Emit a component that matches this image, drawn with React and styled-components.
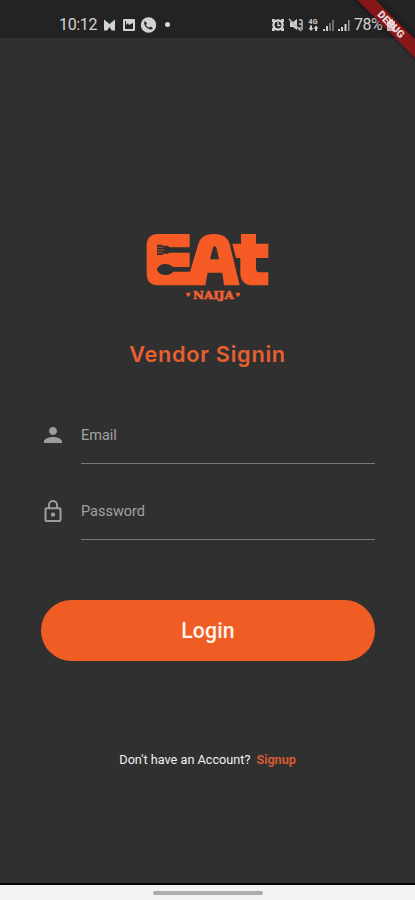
import React from 'react';
import styled, { createGlobalStyle } from 'styled-components';

const Global = createGlobalStyle`
  * { box-sizing: border-box; }
  html, body { margin: 0; background: #303030; }
  body { font-family: Roboto, sans-serif; }
`;

const Screen = styled.div`
  position: relative;
  width: 415px;
  height: 900px;
  display: flex;
  flex-direction: column;
  overflow: hidden;
  background: #303030;
`;

const StatusBar = styled.header`
  height: 38px;
  flex: none;
  display: flex;
  justify-content: space-between;
  align-items: center;
  padding: 11px 18px 0 59px;
  background: #232323;
  color: #d2d2d2;
`;

const StatusGroup = styled.div`
  display: flex;
  align-items: center;
  gap: ${(p) => p.$gap}px;
`;

const StatusText = styled.span`
  font-size: 16px;
  line-height: 20px;
  letter-spacing: ${(p) => p.$spacing || 0}px;
`;

const Dot = styled.span`
  width: 5px;
  height: 5px;
  margin-left: 3px;
  border-radius: 50%;
  background: #d8d8d8;
`;

const Ribbon = styled.div`
  position: absolute;
  top: 18px;
  left: 331px;
  width: 120px;
  height: 13px;
  transform: rotate(45deg);
  background: rgba(143, 21, 25, 0.93);
  box-shadow: 0 0 5px rgba(0, 0, 0, 0.5);
  color: #e6d8d8;
  font-size: 10.5px;
  font-weight: 900;
  line-height: 13px;
  text-align: center;
`;

const Battery = styled.svg`
  position: relative;
  z-index: 1;
  width: 12px;
  height: 14px;
  fill: #f0e6e6;
  opacity: 0.7;
`;

const Content = styled.main`
  flex: 1;
  display: flex;
  flex-direction: column;
  align-items: center;
  padding: 182px 40px 0;
`;

const Title = styled.h1`
  margin: 29px 0 0;
  height: 30px;
  font-family: Inter, sans-serif;
  font-size: 21.7px;
  font-weight: 600;
  line-height: 30px;
  letter-spacing: 0.75px;
  white-space: nowrap;
  color: #e76130;
`;

const Form = styled.form`
  width: 100%;
  margin-top: 37px;
`;

const Field = styled.label`
  display: flex;
  height: 76px;
  color: #a2a2a2;
`;

const FieldIcon = styled.svg`
  width: 24px;
  height: 24px;
  margin: 17px 16px 0 1px;
  flex: none;
  fill: #9d9d9d;
`;

const FieldBox = styled.span`
  flex: 1;
  height: 58px;
  padding-top: 20px;
  border-bottom: 1px solid #777;
  font-size: 14.5px;
  line-height: 20px;
`;

const LoginButton = styled.button`
  display: block;
  width: 334px;
  height: 61px;
  margin: 42px 0 0 1px;
  padding: 1px 0 0;
  border: 0;
  border-radius: 31px;
  background: #ef5d24;
  color: #fff4ec;
  font: 500 21.200px/30px Roboto, sans-serif;
  letter-spacing: 0.2px;
`;

const Prompt = styled.p`
  display: flex;
  gap: 6px;
  margin: 89px 0 0;
  font-size: 12.7px;
  line-height: 20px;
  white-space: nowrap;
  color: #f0f0f0;
`;

const SignupLink = styled.span`
  font-weight: 700;
  letter-spacing: -0.1px;
  color: #d45a30;
`;

const NavBar = styled.footer`
  height: 17px;
  flex: none;
  display: flex;
  justify-content: center;
  padding-top: 6px;
  border-top: 2px solid #050505;
  background: #f3f3f3;
`;

const Handle = styled.span`
  width: 110px;
  height: 4px;
  border-radius: 2px;
  background: #adadad;
`;

const Logo = () => (
  <svg width="155" height="90" viewBox="0 0 465 270" role="img" aria-label="Eat Naija">
    <g fill="#f65b25">
      <path d="M84 42H179V82H119L113 77H99L96 74H81V105H97L101 101H113L119 98H179V141H130C122 134 112 131 103 132C92 133 83 140 81 149C84 158 93 164 103 165C113 166 123 162 130 155H180L205 72Q214 42 247 42H257Q289 42 299 72L329 196H282L277 158H233L226 196H84Q50 196 50 160V78Q50 42 84 42Z" />
      <path d="M333 42H378V71H415V114H378V146Q378 157 389 157H415V196H371Q331 196 331 158V114H318L307 71H333Z" />
      <path d="M168 218h14l-2 7-5 7-5-7zM317 218h14l-2 7-5 7-5-7z" />
    </g>
    <path d="M254 78Q258 78 260 86L267 118H240L248 86Q250 78 254 78Z" fill="#303030" />
    <path d="M81 82H99M81 90H103M81 98H99" stroke="#f65b25" strokeWidth="2" />
    <text x="250" y="236" textAnchor="middle" textLength="122" lengthAdjust="spacingAndGlyphs" fill="#ec6032" stroke="#ec6032" strokeWidth="2" fontFamily="DejaVu Serif, serif" fontWeight="700" fontSize="34">NAIJA</text>
  </svg>
);

const NotificationIcons = () => (
  <svg width="53" height="16" viewBox="0 0 53 16" fill="#d2d2d2">
    <path d="M1 2.5 6.5 7 12 2.5V13.5H8.8L6.5 10 4.2 13.5H1Z" />
    <path fillRule="evenodd" d="M21 2H31Q32 2 32 3V13Q32 14 31 14H21Q20 14 20 13V3Q20 2 21 2ZM22 4V12H30V6L26 8L25 6L23 8V4Z" />
    <circle cx="45.5" cy="8" r="7.7" />
    <path d="M42 4 44 6.2 43 8Q44.3 10 46 10.5L48 9.5 50 11.5Q48.5 13 46.5 12.2 42 10.5 41 6.5 41 4.8 42 4Z" fill="#303030" />
  </svg>
);

const DeviceIcons = () => (
  <svg width="80" height="16" viewBox="0 0 80 16" fill="#cfcfcf">
    <path d="M1 2H4L3 5 1 5ZM10 2H13V5L11 5ZM1 11H3L4 14H1ZM11 11H13V14H10Z" />
    <circle cx="7" cy="8" r="4.6" fill="none" stroke="#dadada" strokeWidth="2.2" />
    <path d="M7 5V8.5H9.5" fill="none" stroke="#dadada" strokeWidth="1.3" />
    <path d="M19 5H22L26 2V13L22 10H19Z" />
    <path d="M18 2 30 14M28 3H31M28 7H31M28 11H30M31 3V13" fill="none" stroke="#b9b9b9" strokeWidth="1.5" />
    <text x="37.5" y="7" fontFamily="Roboto, sans-serif" fontSize="7" fontWeight="700" textLength="9">4G</text>
    <path d="M40 14 37.5 11H39V8.5H41V11H42.5ZM45 8.5 47.5 11.5H46V14H44V11.5H42.5Z" />
    <path d="M52 12H54V14H52ZM55 9H57V14H55Z" />
    <path d="M58 6H60V14H58ZM61 3H63V14H61Z" fill="#6c6c6c" />
    <path d="M67 12H69V14H67ZM70 10H72V14H70ZM73.5 7H75.5V14H73.5Z" />
    <path d="M77 3H78.5V14H77Z" fill="#999" />
  </svg>
);

const BatteryIcon = () => (
  <Battery viewBox="0 0 12 14">
    <path d="M2 3H4V1H8V3H10V13H2Z" />
  </Battery>
);

export default function App() {
  return (
    <>
      <Global />
      <Screen>
        <StatusBar>
          <StatusGroup $gap={6}>
            <StatusText $spacing={-0.35}>10:12</StatusText>
            <NotificationIcons />
            <Dot />
          </StatusGroup>
          <StatusGroup $gap={3}>
            <DeviceIcons />
            <StatusText $spacing={-0.6}>78%</StatusText>
            <BatteryIcon />
          </StatusGroup>
        </StatusBar>
        <Content>
          <Logo />
          <Title>Vendor Signin</Title>
          <Form>
            <Field>
              <FieldIcon viewBox="0 0 24 24">
                <path d="M12 12c2.2 0 4-1.8 4-4s-1.8-4-4-4-4 1.8-4 4 1.8 4 4 4zm0 2c-3 0-9 1.4-9 4.5V20h18v-1.5c0-3.1-6-4.5-9-4.5z" />
              </FieldIcon>
              <FieldBox>Email</FieldBox>
            </Field>
            <Field>
              <FieldIcon viewBox="0 0 24 24">
                <path fillRule="evenodd" d="M18.5 8.3H17V6A5 5 0 0 0 7 6v2.3H5.500a2 2 0 0 0-2 2V21a2 2 0 0 0 2 2h13a2 2 0 0 0 2-2V10.300a2 2 0 0 0-2-2zM8.900 6a3.100 3.100 0 0 1 6.200 0v2.300H8.900zM18.500 21h-13V10.300h13zM12 17.800a2.200 2.200 0 1 0 0-4.400 2.200 2.200 0 0 0 0 4.400z" />
              </FieldIcon>
              <FieldBox>Password</FieldBox>
            </Field>
            <LoginButton type="button">Login</LoginButton>
          </Form>
          <Prompt>
            Don't have an Account?
            <SignupLink>Signup</SignupLink>
          </Prompt>
        </Content>
        <NavBar>
          <Handle />
        </NavBar>
        <Ribbon>DEBUG</Ribbon>
      </Screen>
    </>
  );
}
